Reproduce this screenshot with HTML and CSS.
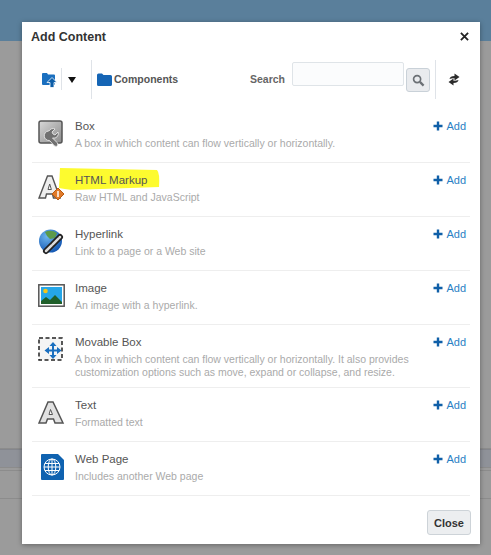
FILE: index.html
```html
<!DOCTYPE html>
<html lang="en">
<head>
<meta charset="utf-8">
<title>Add Content</title>
<link rel="stylesheet" href="styles.css">
</head>
<body>
<div class="backdrop">
  <div class="topband"></div>
  <div class="bgrows">
    <div class="bgrow r1"></div>
    <div class="bgrow r2"></div>
    <div class="bgrow r3"></div>
    <div class="bgrow r4"></div>
  </div>
</div>
<div class="dialog">
  <header class="head">
    <h1>Add Content</h1>
    <svg class="x" viewBox="0 0 10 10"><path d="M1 1l8 8M9 1l-8 8"/></svg>
  </header>
  <div class="toolbar">
    <svg class="upfolder" viewBox="0 0 15 16"><path d="M0 2q0-1 1-1h4l1 1.500h6q1 0 1 1V12q0 1-1 1H1q-1 0-1-1z" fill="#1a6fbf"/><path d="M10 5.500l5 5h-3V15.500H8v-5H5z" fill="#0d5ea8" stroke="#fff" stroke-width=".8"/></svg>
    <span class="sep short"></span>
    <span class="caret"></span>
    <span class="sep tall"></span>
    <svg class="folder" viewBox="0 0 15 13"><path d="M0 2q0-1.500 1.500-1.500h3.500l1.500 1.500h7q1.500 0 1.500 1.500v8q0 1.500-1.500 1.500h-12q-1.500 0-1.500-1.500z" fill="#1565b5"/></svg>
    <span class="crumb">Components</span>
    <label class="search-label">Search</label>
    <input class="search" type="text" aria-label="Search">
    <button class="searchbtn" aria-label="Search"><svg viewBox="0 0 14 14"><circle cx="5.500" cy="5.500" r="3.800"/><path d="M8.500 8.500l4 4" class="h"/></svg></button>
    <span class="sep tall s3"></span>
    <svg class="swap" viewBox="0 0 14 14"><path d="M2.500 6.500Q3 3.500 7.500 3.500V1l5 3.500-5 3.500V5.800Q5 5.500 2.500 6.500z" fill="#2b2b2b"/><path d="M11.500 7.500Q11 10.500 6.500 10.500V13l-5-3.500 5-3.500v2.200Q9 8.500 11.500 7.500z" fill="#2b2b2b"/></svg>
  </div>
  <ul class="list">
    <li class="row">
      <svg class="ico" viewBox="0 0 27 28"><defs><linearGradient id="g1" x1="0" y1="0" x2="1" y2="1"><stop offset="0" stop-color="#d8d8d8"/><stop offset="1" stop-color="#8a8a8a"/></linearGradient></defs><rect x="1" y="1" width="23" height="22" rx="2" fill="url(#g1)" stroke="#555" stroke-width="1.500"/><path d="M11 11a4.500 4.500 0 0 1 6-2l-3 3 1 2 2 1 3-3a4.500 4.500 0 0 1-5.500 6l4.500 4.500q1.500 1.500.5 3t-3 .5l-5-5.500a4.500 4.500 0 0 1-1-9.500z" fill="#707070" stroke="#e8e8e8" stroke-width=".9"/></svg>
      <div class="txt"><div class="t">Box</div><div class="d">A box in which content can flow vertically or horizontally.</div></div>
      <a class="add"><svg viewBox="0 0 10 10"><path d="M5 .5v9M.5 5h9"/></svg>Add</a>
    </li>
    <li class="row hl">
      <svg class="marker" viewBox="0 0 102 24" preserveAspectRatio="none"><path d="M2 1L99 3q3 3 2 17L14 23q-8-1-13-2z" fill="#fdfb2f"/></svg>
      <svg class="ico" viewBox="0 0 27 28"><path d="M1 24L9.500 2h4.500l8 22h-6.500l-1-4H8.500l-1 4z" fill="#eee" stroke="#555" stroke-width="1.400"/><path d="M10 15.500l1.700-5.500 1.700 5.500z" fill="#fff" stroke="#555"/><path d="M20 14l6 6-6 6-6-6z" fill="#e07a2a" stroke="#b85a10"/><path d="M20 17v6" stroke="#fff" stroke-width="1.500"/></svg>
      <div class="txt"><div class="t">HTML Markup</div><div class="d">Raw HTML and JavaScript</div></div>
      <a class="add"><svg viewBox="0 0 10 10"><path d="M5 .5v9M.5 5h9"/></svg>Add</a>
    </li>
    <li class="row">
      <svg class="ico" viewBox="0 0 27 28"><defs><radialGradient id="g2" cx=".35" cy=".3" r=".8"><stop offset="0" stop-color="#6fb6ee"/><stop offset="1" stop-color="#0b4fae"/></radialGradient></defs><circle cx="12.500" cy="13" r="11.500" fill="url(#g2)"/><path d="M7 4q6-3 12 1l-2 5-5 1-3-3z" fill="#5c9a4a"/><path d="M8 23L22 9" stroke="#222" stroke-width="6" stroke-linecap="round" stroke-dasharray="8 1.500"/><path d="M8 23L22 9" stroke="#ddd" stroke-width="2.500" stroke-linecap="round" stroke-dasharray="8 1.500"/></svg>
      <div class="txt"><div class="t">Hyperlink</div><div class="d">Link to a page or a Web site</div></div>
      <a class="add"><svg viewBox="0 0 10 10"><path d="M5 .5v9M.5 5h9"/></svg>Add</a>
    </li>
    <li class="row">
      <svg class="ico" viewBox="0 0 27 28"><rect x=".8" y="2.800" width="25.400" height="21.400" fill="#fff" stroke="#555" stroke-width="1.500"/><rect x="3" y="5" width="21" height="17" fill="#25a6e8"/><circle cx="7.500" cy="9" r="2.300" fill="#f5c518"/><path d="M3 22v-3l5-4 4 3 5-5 7 7v2z" fill="#1f5f2a"/></svg>
      <div class="txt"><div class="t">Image</div><div class="d">An image with a hyperlink.</div></div>
      <a class="add"><svg viewBox="0 0 10 10"><path d="M5 .5v9M.5 5h9"/></svg>Add</a>
    </li>
    <li class="row tall-row">
      <svg class="ico" viewBox="0 0 27 28"><rect x="1" y="2" width="23" height="22" fill="#f4f4f4" stroke="#222" stroke-width="1.500" stroke-dasharray="4 2.500"/><path d="M15 6l3.500 4H16v3.500h3V11l4.500 3.500L19 18v-2.500h-3V19h2.500L15 23l-3.500-4H14v-3.500h-3V18l-4.500-3.500L11 11v2.500h3V10h-2.500z" fill="#1a6fbf"/></svg>
      <div class="txt"><div class="t">Movable Box</div><div class="d">A box in which content can flow vertically or horizontally. It also provides customization options such as move, expand or collapse, and resize.</div></div>
      <a class="add"><svg viewBox="0 0 10 10"><path d="M5 .5v9M.5 5h9"/></svg>Add</a>
    </li>
    <li class="row">
      <svg class="ico" viewBox="0 0 27 28"><path d="M1 24L10 3h5l10 21h-8l-1.500-4h-6L8 24z" fill="#e2e2e2" stroke="#555" stroke-width="1.500"/><path d="M11 15.500l1.500-5 2 5z" fill="#fff" stroke="#555"/></svg>
      <div class="txt"><div class="t">Text</div><div class="d">Formatted text</div></div>
      <a class="add"><svg viewBox="0 0 10 10"><path d="M5 .5v9M.5 5h9"/></svg>Add</a>
    </li>
    <li class="row">
      <svg class="ico" viewBox="0 0 27 28"><path d="M4 1h16l6 6v19q0 1-1 1H4q-1 0-1-1V2q0-1 1-1z" fill="#0f62b0"/><g fill="none" stroke="#fff" stroke-width="1"><circle cx="14" cy="14" r="8"/><ellipse cx="14" cy="14" rx="3.800" ry="8"/><path d="M14 6v16M6 14h16M7 10.500h14M7 17.500h14"/></g></svg>
      <div class="txt"><div class="t">Web Page</div><div class="d">Includes another Web page</div></div>
      <a class="add"><svg viewBox="0 0 10 10"><path d="M5 .5v9M.5 5h9"/></svg>Add</a>
    </li>
  </ul>
  <footer class="foot"><button class="close">Close</button></footer>
</div>
</body>
</html>
```
FILE: styles.css
```css
html, body { margin: 0; padding: 0; height: 100%; }
body {
  width: 491px;
  height: 555px;
  overflow: hidden;
  position: relative;
  font-family: "Liberation Sans", Arial, sans-serif;
  background: #9b9b9b;
}
.backdrop { height: 100%; display: flex; flex-direction: column; }
.topband { height: 41px; background: #5a7f9b; }
.bgrows { flex: 1; padding-top: 371px; }
.bgrow { border-bottom: 1px solid #8c8c8c; }
.r1 { height: 36px; }
.r2 { height: 17px; background: #8f9299; border-top: 1px solid #84868c; }
.r3 { height: 2px; }
.r4 { height: 27px; }

.dialog {
  position: absolute;
  left: 22px;
  top: 22px;
  width: 458px;
  height: 522px;
  background: #fff;
  box-shadow: 0 1px 5px rgba(0, 0, 0, .35);
  display: flex;
  flex-direction: column;
}
.head {
  height: 29px;
  display: flex;
  align-items: center;
  justify-content: space-between;
  padding: 0 11px 0 9px;
  flex: none;
}
h1 { margin: 0; font-size: 12.500px; font-weight: bold; color: #333; }
.x { width: 9px; height: 9px; fill: none; stroke: #222; stroke-width: 2; }

.toolbar {
  height: 39px;
  margin-top: 9px;
  display: flex;
  align-items: center;
  padding-left: 20px;
  flex: none;
}
.upfolder { width: 15px; height: 16px; }
.sep { width: 1px; background: #dfe3e8; display: block; flex: none; }
.sep.short { height: 22px; margin: -1px 0 0 4px; }
.sep.tall { height: 39px; margin-left: 15px; }
.caret {
  width: 0; height: 0;
  margin: 0 0 0 6px;
  border-left: 4.500px solid transparent;
  border-right: 4.500px solid transparent;
  border-top: 6px solid #111;
}
.folder { width: 15px; height: 13px; margin: -1px 2px 0 5px; }
.crumb { font-size: 10.500px; font-weight: bold; color: #555; width: 64px; white-space: nowrap; margin-top: -1px; }
.search-label { font-size: 10.500px; font-weight: bold; color: #666; margin: -1px 0 0 72px; width: 34px; }
.search {
  width: 112px;
  height: 24px;
  box-sizing: border-box;
  margin: -11px 0 0 8px;
  border: 1px solid #dfe4e8;
  border-radius: 2px;
  background: #fbfcfd;
  padding: 0;
}
.searchbtn {
  width: 24px;
  height: 24px;
  margin: 1px 0 0 2px;
  padding: 0;
  border: 1px solid #c9d1d8;
  border-radius: 3px;
  background: #e9ebee;
  display: flex;
  align-items: center;
  justify-content: center;
}
.searchbtn svg { width: 13px; height: 13px; fill: none; stroke: #6b7075; stroke-width: 1.800; }
.searchbtn .h { stroke-width: 2.400; }
.sep.s3 { margin-left: 5px; }
.swap { width: 14px; height: 15px; margin-left: 11px; }

.list { list-style: none; margin: 0; padding: 10px 10px 0; flex: none; }
.row {
  height: 53px;
  border-bottom: 1px solid #eeeeee;
  display: flex;
  position: relative;
  padding: 0 0 0 6px;
}
.tall-row { height: 62px; }
.ico { width: 27px; height: 28px; flex: none; margin-top: 11px; position: relative; }
.txt { margin: 0 0 0 10px; width: 345px; flex: none; position: relative; }
.t { font-size: 11.500px; line-height: 14px; color: #555; margin-top: 10px; }
.d { font-size: 10.500px; line-height: 13px; color: #aaa; margin-top: 4px; }
.add {
  font-size: 11px;
  color: #2a7fc4;
  margin: 10px 0 0 auto;
  padding-right: 4px;
  line-height: 14px;
  display: flex;
  align-items: center;
  gap: 3px;
  height: 14px;
}
.add svg { width: 10px; height: 10px; fill: none; stroke: #0f5fa8; stroke-width: 2.400; }
.row .txt, .row .add { z-index: 1; }
.marker { position: absolute; left: 26px; top: 4px; width: 102px; height: 24px; }
.foot { display: flex; justify-content: flex-end; padding: 14px 9px 0 0; }
.close {
  width: 44px;
  height: 25px;
  padding: 0;
  font: bold 11px "Liberation Sans", Arial, sans-serif;
  color: #333;
  border: 1px solid #cdd3d8;
  border-radius: 3px;
  background: #eceef0;
}
```
